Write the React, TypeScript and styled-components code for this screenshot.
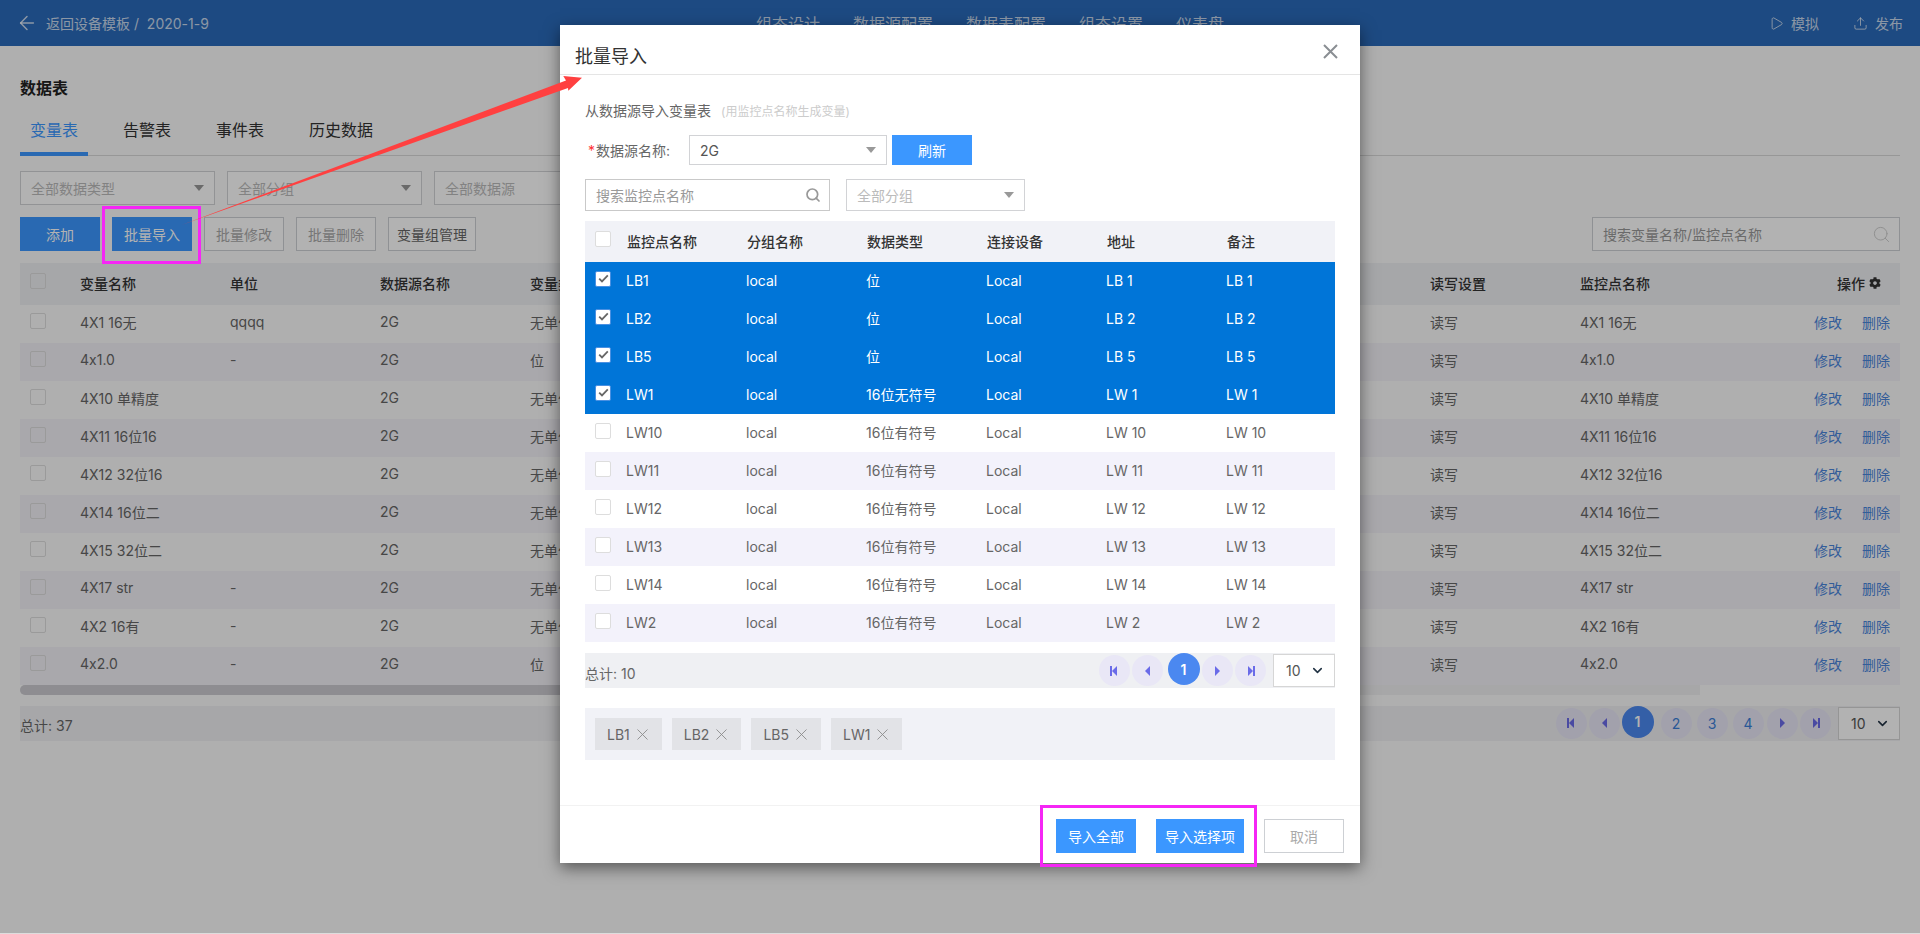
import { ArrowLeft, ChevronDown, Play, Search, Upload, X } from 'lucide-react'
import { FaCog } from 'react-icons/fa'
import styled, { createGlobalStyle } from 'styled-components'

const GlobalStyle = createGlobalStyle`
	html, body {
		margin: 0;
		padding: 0;
		background: #fbfbfb;
	}
	body {
		font-family: Inter, "Noto Sans CJK SC", sans-serif;
		font-size: 14px;
		font-feature-settings: "calt" 0;
		color: #666;
	}
	* {
		box-sizing: border-box;
	}
`

const PRIMARY = '#3b97ff'

const Page = styled.div`
	position: relative;
	width: 100%;
	height: 934px;
	overflow: hidden;
	background: #fbfbfb;
	border-bottom: 1px solid #ddd;
`
const TopBar = styled.header`
	height: 46px;
	background: #2a6aba;
	display: grid;
	grid-template-columns: 756px 468px 1fr;
	align-items: center;
	color: rgba(255, 255, 255, 0.75);
`
const BackLink = styled.div`
	display: flex;
	align-items: center;
	padding-left: 16px;
	gap: 8px;
`
const Nav = styled.nav`
	display: flex;
	justify-content: space-between;
	font-size: 16px;
`
const TopActions = styled.div`
	display: flex;
	justify-content: flex-end;
	align-items: center;
	gap: 34px;
	padding-right: 17px;
`
const TopAction = styled.span`
	display: flex;
	align-items: center;
	gap: 7px;
`
const Content = styled.main`
	padding: 0 20px;
`
const Title = styled.h2`
	margin: 30px 0 8px;
	font-size: 16px;
	line-height: 24px;
	font-weight: 700;
	color: #222;
`
const Tabs = styled.div`
	display: flex;
	gap: 25px;
	height: 48px;
	border-bottom: 1px solid #d8d8d8;
`
const Tab = styled.div<{ $active?: boolean }>`
	height: 48px;
	padding: 0 10px;
	line-height: 44px;
	font-size: 16px;
	color: ${(p) => (p.$active ? PRIMARY : '#333')};
	border-bottom: ${(p) => (p.$active ? `4px solid ${PRIMARY}` : 'none')};
`
const FilterRow = styled.div`
	display: flex;
	gap: 12px;
	margin-top: 15px;
`
const Caret = styled.i`
	width: 0;
	height: 0;
	border: 5px solid transparent;
	border-top: 6px solid #999;
	border-bottom: 0;
`
const Dropdown = styled.div<{ $w: number; $h: number; $dark?: boolean }>`
	width: ${(p) => p.$w}px;
	height: ${(p) => p.$h}px;
	background: #fff;
	border: 1px solid #d2d3d6;
	display: flex;
	align-items: center;
	justify-content: space-between;
	padding: 0 10px;
	color: ${(p) => (p.$dark ? '#555' : '#bbb')};
	flex-shrink: 0;
`
const ButtonRow = styled.div`
	display: flex;
	gap: 12px;
	margin-top: 12px;
`
const Btn = styled.button<{ $w?: number; $h?: number; $primary?: boolean; $muted?: boolean }>`
	width: ${(p) => p.$w ?? 80}px;
	height: ${(p) => p.$h ?? 34}px;
	padding: 0;
	font: inherit;
	background: ${(p) => (p.$primary ? PRIMARY : '#fff')};
	border: ${(p) => (p.$primary ? 'none' : '1px solid #cdd0d4')};
	color: ${(p) => (p.$primary ? '#fff' : p.$muted ? '#aaa' : '#666')};
	flex-shrink: 0;
`
const SearchBox = styled.div<{ $w: number; $h: number; $dark?: boolean }>`
	width: ${(p) => p.$w}px;
	height: ${(p) => p.$h}px;
	display: flex;
	align-items: center;
	justify-content: space-between;
	background: #fff;
	border: 1px solid ${(p) => (p.$dark ? '#c9c9c9' : '#cdd0d4')};
	padding: 0 8px 0 10px;
	color: #999;
	flex-shrink: 0;
`
const Spacer = styled.div`
	flex: 1;
`
const VarTable = styled.div`
	margin-top: 12px;
`
const VarRow = styled.div<{ $shade?: boolean; $head?: boolean }>`
	display: grid;
	grid-template-columns: 60px repeat(11, 150px) 1fr;
	align-items: center;
	height: ${(p) => (p.$head ? 41.6 : 38)}px;
	padding-bottom: ${(p) => (p.$head ? 2 : 4)}px;
	background: ${(p) => (p.$head ? '#eeeff3' : p.$shade ? '#f2f1f6' : 'transparent')};
	color: ${(p) => (p.$head ? '#333' : '#666')};
	font-weight: ${(p) => (p.$head ? 500 : 400)};
`
const CheckCell = styled.div<{ $low?: boolean }>`
	padding: 0 0 ${(p) => (p.$low ? 1 : 3)}px 10px;
	display: flex;
`
const Check = styled.span<{ $checked?: boolean; $clear?: boolean }>`
	width: 16px;
	height: 16px;
	display: flex;
	align-items: center;
	justify-content: center;
	border-radius: 2px;
	background: ${(p) => (p.$clear ? 'transparent' : '#fff')};
	border: 1px solid ${(p) => (p.$checked ? '#4a90e2' : '#ddd')};
`
const RowActions = styled.div`
	display: flex;
	justify-content: flex-end;
	gap: 20px;
	padding-right: 10px;
	color: #4a86dc;
`
const ActionsHead = styled.div`
	display: flex;
	justify-content: flex-end;
	align-items: center;
	gap: 4px;
	padding-right: 19px;
`
const ScrollTrack = styled.div`
	width: 1680px;
	height: 10px;
	background: #efeff1;
	border-radius: 5px 0 0 5px;
	overflow: hidden;
`
const ScrollThumb = styled.div`
	width: 900px;
	height: 10px;
	background: #cccbd0;
`
const PagerBand = styled.div<{ $top: number }>`
	height: 35px;
	margin-top: ${(p) => p.$top}px;
	display: flex;
	align-items: flex-start;
	background: #eff0f3;
`
const PagerTotal = styled.span`
	flex: 1;
	align-self: center;
	padding-top: 4px;
	color: #666;
`
const PageIcon = styled.span`
	width: 31px;
	height: 31px;
	margin: 2px 1px 0;
	display: flex;
	align-items: center;
	justify-content: center;
	border-radius: 50%;
	background: #e9e7f6;
	color: #6a6be8;
`
const PageNum = styled.span<{ $active?: boolean; $only?: boolean }>`
	width: ${(p) => (p.$active ? 32 : 31)}px;
	height: ${(p) => (p.$active ? 32 : 31)}px;
	margin-top: ${(p) => (p.$active ? 0 : 2)}px;
	margin-left: ${(p) => (p.$only ? 3.5 : p.$active ? 0.5 : 2.5)}px;
	margin-right: ${(p) => (p.$only ? 1.5 : p.$active ? 4.5 : 2.5)}px;
	display: flex;
	align-items: center;
	justify-content: center;
	border-radius: 50%;
	font-weight: ${(p) => (p.$active ? 600 : 400)};
	background: ${(p) => (p.$active ? '#4b88f0' : '#e9e7f6')};
	color: ${(p) => (p.$active ? '#fff' : '#3b7fd8')};
`
const PageSize = styled.div`
	width: 62px;
	height: 33px;
	margin: 1px 0 0 6px;
	display: flex;
	align-items: center;
	justify-content: space-between;
	padding: 0 9px 0 12px;
	background: #fff;
	border: 1px solid #d6d6d6;
	color: #555;
`
const Overlay = styled.div`
	position: absolute;
	inset: 0;
	background: rgba(0, 0, 0, 0.3);
	display: flex;
	justify-content: center;
	padding-top: 25px;
`
const Modal = styled.section`
	width: 800px;
	height: 838px;
	background: #fff;
	display: flex;
	flex-direction: column;
	box-shadow: 0 5px 15px rgba(0, 0, 0, 0.5);
`
const ModalHead = styled.div`
	height: 50px;
	padding: 10px 22px 0 15px;
	display: flex;
	align-items: center;
	justify-content: space-between;
	border-bottom: 1px solid #e5e5e5;
	color: #8a8e93;
`
const ModalTitle = styled.h3`
	margin: 0;
	font-size: 18px;
	font-weight: 400;
	color: #333;
`
const CloseIcon = styled.svg`
	margin-top: -6px;
`
const ModalBody = styled.div`
	flex: 1;
	padding: 26px 25px 0;
`
const ImportHint = styled.div`
	height: 20px;
	line-height: 20px;
	color: #666;
`
const HintNote = styled.span`
	margin-left: 10px;
	font-size: 12px;
	color: #ccc;
`
const SourceRow = styled.div`
	display: flex;
	align-items: center;
	margin-top: 14px;
	padding-left: 3px;
`
const Required = styled.span`
	color: #f33;
	margin-right: 1px;
`
const SourceLabel = styled.span`
	width: 101px;
	color: #666;
`
const RefreshBtn = styled(Btn)`
	margin-left: 5px;
`
const SearchRow = styled.div`
	display: flex;
	gap: 16px;
	margin-top: 14px;
`
const PointRow = styled.div<{ $selected?: boolean; $shade?: boolean; $head?: boolean }>`
	display: grid;
	grid-template-columns: ${(p) => (p.$head ? 42 : 41)}px repeat(6, 120px);
	align-items: center;
	height: ${(p) => (p.$head ? 41 : 38)}px;
	padding-bottom: 2px;
	background: ${(p) => (p.$head ? '#f1f2f7' : p.$selected ? '#0075d8' : p.$shade ? '#f3f2fb' : '#fff')};
	color: ${(p) => (p.$head ? '#333' : p.$selected ? '#fff' : '#666')};
	font-weight: ${(p) => (p.$head ? 500 : 400)};
`
const PointTable = styled.div`
	margin-top: 10px;
`
const TagBand = styled.div`
	height: 52px;
	margin-top: 20px;
	padding: 10px;
	display: flex;
	gap: 10px;
	background: #f1f2f7;
`
const Tag = styled.span`
	height: 32px;
	padding: 0 10px 0 12px;
	display: flex;
	align-items: center;
	gap: 3px;
	background: #e2e3e7;
	color: #666;
`
const TagClose = styled(X)`
	color: #888;
`
const ModalFoot = styled.div`
	height: 58px;
	padding: 13px 16px 0 0;
	display: flex;
	justify-content: flex-end;
	gap: 20px;
	border-top: 1px solid #f2f2f2;
`
const Annotations = styled.svg`
	position: absolute;
	inset: 0;
	pointer-events: none;
`

type Variable = {
	name: string
	unit: string
	kind: string
	point: string
}

const variables: Variable[] = [
	{ name: '4X1 16无', unit: 'qqqq', kind: '无单位', point: '4X1 16无' },
	{ name: '4x1.0', unit: '-', kind: '位', point: '4x1.0' },
	{ name: '4X10 单精度', unit: '', kind: '无单位', point: '4X10 单精度' },
	{ name: '4X11 16位16', unit: '', kind: '无单位', point: '4X11 16位16' },
	{ name: '4X12 32位16', unit: '', kind: '无单位', point: '4X12 32位16' },
	{ name: '4X14 16位二', unit: '', kind: '无单位', point: '4X14 16位二' },
	{ name: '4X15 32位二', unit: '', kind: '无单位', point: '4X15 32位二' },
	{ name: '4X17 str', unit: '-', kind: '无单位', point: '4X17 str' },
	{ name: '4X2 16有', unit: '-', kind: '无单位', point: '4X2 16有' },
	{ name: '4x2.0', unit: '-', kind: '位', point: '4x2.0' },
]

const points = [
	{ name: 'LB1', type: '位', addr: 'LB 1', selected: true },
	{ name: 'LB2', type: '位', addr: 'LB 2', selected: true },
	{ name: 'LB5', type: '位', addr: 'LB 5', selected: true },
	{ name: 'LW1', type: '16位无符号', addr: 'LW 1', selected: true },
	{ name: 'LW10', type: '16位有符号', addr: 'LW 10' },
	{ name: 'LW11', type: '16位有符号', addr: 'LW 11' },
	{ name: 'LW12', type: '16位有符号', addr: 'LW 12' },
	{ name: 'LW13', type: '16位有符号', addr: 'LW 13' },
	{ name: 'LW14', type: '16位有符号', addr: 'LW 14' },
	{ name: 'LW2', type: '16位有符号', addr: 'LW 2' },
]

// these columns sit behind the dialog
const coveredColumns = [1, 2, 3, 4, 5]

function CheckMark() {
	return (
		<svg width="11" height="9" viewBox="0 0 11 9">
			<path d="M1.2 4.6 L4 7.4 L9.8 1.4" fill="none" stroke="#666" strokeWidth="1.8" />
		</svg>
	)
}

function Box({ checked, clear }: { checked?: boolean; clear?: boolean }) {
	return (
		<Check $checked={checked} $clear={clear}>
			{checked && <CheckMark />}
		</Check>
	)
}

function PagerGlyph({ dir, edge }: { dir: 'left' | 'right'; edge?: boolean }) {
	const tri = dir === 'left' ? 'M8 1 L3 6 L8 11 Z' : 'M3 1 L8 6 L3 11 Z'
	const barX = dir === 'left' ? 1 : 8
	return (
		<svg width="11" height="12" viewBox="0 0 11 12" fill="currentColor">
			<path d={tri} />
			{edge && <rect x={barX} y="1" width="2" height="10" />}
		</svg>
	)
}

function Pager({ pages, total, top }: { pages: number[]; total: number; top: number }) {
	return (
		<PagerBand $top={top}>
			<PagerTotal>总计: {total}</PagerTotal>
			<PageIcon>
				<PagerGlyph dir="left" edge />
			</PageIcon>
			<PageIcon>
				<PagerGlyph dir="left" />
			</PageIcon>
			{pages.map((n) => (
				<PageNum key={n} $active={n === 1} $only={pages.length === 1}>
					{n}
				</PageNum>
			))}
			<PageIcon>
				<PagerGlyph dir="right" />
			</PageIcon>
			<PageIcon>
				<PagerGlyph dir="right" edge />
			</PageIcon>
			<PageSize>
				10
				<ChevronDown size={15} strokeWidth={2.5} color="#234" />
			</PageSize>
		</PagerBand>
	)
}

export default function App() {
	return (
		<Page>
			<GlobalStyle />
			<TopBar>
				<BackLink>
					<ArrowLeft size={22} strokeWidth={1.6} />
					<span>返回设备模板 /&nbsp;&nbsp;2020-1-9</span>
				</BackLink>
				<Nav>
					<span>组态设计</span>
					<span>数据源配置</span>
					<span>数据表配置</span>
					<span>组态设置</span>
					<span>仪表盘</span>
				</Nav>
				<TopActions>
					<TopAction>
						<Play size={15} strokeWidth={1.5} />
						模拟
					</TopAction>
					<TopAction>
						<Upload size={15} strokeWidth={1.5} />
						发布
					</TopAction>
				</TopActions>
			</TopBar>
			<Content>
				<Title>数据表</Title>
				<Tabs>
					<Tab $active>变量表</Tab>
					<Tab>告警表</Tab>
					<Tab>事件表</Tab>
					<Tab>历史数据</Tab>
				</Tabs>
				<FilterRow>
					<Dropdown $w={195} $h={34}>
						全部数据类型
						<Caret />
					</Dropdown>
					<Dropdown $w={195} $h={34}>
						全部分组
						<Caret />
					</Dropdown>
					<Dropdown $w={195} $h={34}>
						全部数据源
						<Caret />
					</Dropdown>
				</FilterRow>
				<ButtonRow>
					<Btn $primary>添加</Btn>
					<Btn $primary>批量导入</Btn>
					<Btn $muted>批量修改</Btn>
					<Btn $muted>批量删除</Btn>
					<Btn $w={88}>变量组管理</Btn>
					<Spacer />
					<SearchBox $w={308} $h={34}>
						搜索变量名称/监控点名称
						<Search size={19} strokeWidth={1.2} color="#ccc" />
					</SearchBox>
				</ButtonRow>
				<VarTable>
					<VarRow $head>
						<CheckCell>
							<Box clear />
						</CheckCell>
						<div>变量名称</div>
						<div>单位</div>
						<div>数据源名称</div>
						<div>变量类型</div>
						{coveredColumns.map((c) => (
							<div key={c} />
						))}
						<div>读写设置</div>
						<div>监控点名称</div>
						<ActionsHead>
							操作
							<FaCog size={12} />
						</ActionsHead>
					</VarRow>
					{variables.map((v, i) => (
						<VarRow key={v.name} $shade={i % 2 === 1}>
							<CheckCell $low>
								<Box clear />
							</CheckCell>
							<div>{v.name}</div>
							<div>{v.unit}</div>
							<div>2G</div>
							<div>{v.kind}</div>
							{coveredColumns.map((c) => (
								<div key={c} />
							))}
							<div>读写</div>
							<div>{v.point}</div>
							<RowActions>
								<span>修改</span>
								<span>删除</span>
							</RowActions>
						</VarRow>
					))}
					<ScrollTrack>
						<ScrollThumb />
					</ScrollTrack>
				</VarTable>
				<Pager pages={[1, 2, 3, 4]} total={37} top={11} />
			</Content>
			<Overlay>
				<Modal>
					<ModalHead>
						<ModalTitle>批量导入</ModalTitle>
						<CloseIcon width="15" height="15" viewBox="0 0 15 15">
							<path d="M1 1 L14 14 M14 1 L1 14" fill="none" stroke="#8a8e93" strokeWidth="2" />
						</CloseIcon>
					</ModalHead>
					<ModalBody>
						<ImportHint>
							从数据源导入变量表
							<HintNote>(用监控点名称生成变量)</HintNote>
						</ImportHint>
						<SourceRow>
							<SourceLabel>
								<Required>*</Required>
								数据源名称:
							</SourceLabel>
							<Dropdown $w={198} $h={30} $dark>
								2G
								<Caret />
							</Dropdown>
							<RefreshBtn $primary $h={30}>
								刷新
							</RefreshBtn>
						</SourceRow>
						<SearchRow>
							<SearchBox $w={245} $h={32} $dark>
								搜索监控点名称
								<Search size={16} strokeWidth={2.6} color="#999" />
							</SearchBox>
							<Dropdown $w={179} $h={32}>
								全部分组
								<Caret />
							</Dropdown>
						</SearchRow>
						<PointTable>
							<PointRow $head>
								<CheckCell>
									<Box />
								</CheckCell>
								<div>监控点名称</div>
								<div>分组名称</div>
								<div>数据类型</div>
								<div>连接设备</div>
								<div>地址</div>
								<div>备注</div>
							</PointRow>
							{points.map((p, i) => (
								<PointRow key={p.name} $selected={p.selected} $shade={i % 2 === 1}>
									<CheckCell>
										<Box checked={p.selected} />
									</CheckCell>
									<div>{p.name}</div>
									<div>local</div>
									<div>{p.type}</div>
									<div>Local</div>
									<div>{p.addr}</div>
									<div>{p.addr}</div>
								</PointRow>
							))}
						</PointTable>
						<Pager pages={[1]} total={10} top={11} />
						<TagBand>
							{points
								.filter((p) => p.selected)
								.map((p) => (
									<Tag key={p.name}>
										{p.name}
										<TagClose size={19} strokeWidth={1.1} />
									</Tag>
								))}
						</TagBand>
					</ModalBody>
					<ModalFoot>
						<Btn $primary>导入全部</Btn>
						<Btn $primary $w={88}>
							导入选择项
						</Btn>
						<Btn $muted>取消</Btn>
					</ModalFoot>
				</Modal>
			</Overlay>
			<Annotations width="1920" height="934" viewBox="0 0 1920 934">
				<rect x="103.5" y="207.5" width="96" height="55" fill="none" stroke="#f526f5" strokeWidth="3" />
				<rect x="1041.5" y="806.5" width="214" height="59" fill="none" stroke="#f526f5" strokeWidth="3" />
				<polygon points="181.5,225 566,80.5 563.3,76 582,77.7 568.3,90.7 568,88" fill="#ff4040" />
			</Annotations>
		</Page>
	)
}
